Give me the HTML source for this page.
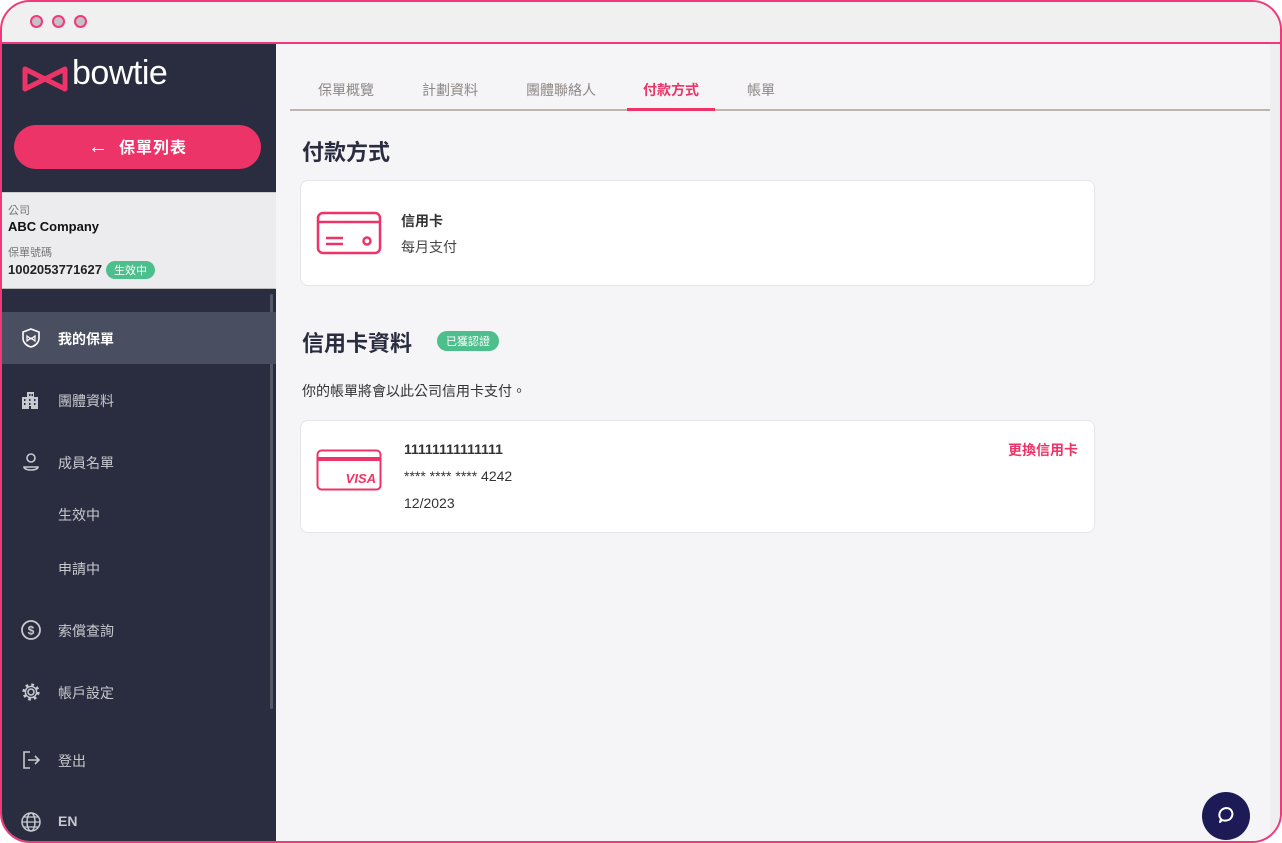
<!DOCTYPE html>
<html><head><meta charset="utf-8"><style>
*{box-sizing:border-box;margin:0;padding:0}
html,body{width:1282px;height:843px;overflow:hidden;background:#fff}
body{font-family:"Liberation Sans","Noto Sans CJK TC",sans-serif;position:relative}
.win{position:absolute;left:0;top:0;width:1282px;height:843px;border:2px solid #f0397a;border-radius:30px;overflow:hidden;background:#f5f5f7}
.title{position:absolute;left:0;top:0;right:0;height:42px;background:#f0f0f0;border-bottom:2px solid #f0397a}
.dot{position:absolute;top:13px;width:13px;height:13px;border-radius:50%;background:#c4c0c6;border:2px solid #f0397a}
.side{position:absolute;left:0;top:42px;width:274px;bottom:0;background:#2a2d3f}
.abs{position:absolute}
.btn{position:absolute;left:12px;top:81px;width:247px;height:44px;border-radius:22px;background:#ec3468;color:#fff;font-size:16px;font-weight:bold;text-align:center;line-height:44px;letter-spacing:1px}
.info{position:absolute;left:0;top:148px;width:274px;height:97px;background:#ececef;border-top:1px solid #ccc;border-bottom:1px solid #bbb}
.nav{position:absolute;left:0;width:274px;height:52px;color:#c8c9cf;font-size:14px}
.nav span{position:absolute;left:56px;top:17px}
.nav svg{position:absolute;left:18px;top:15px}
.main{position:absolute;left:274px;top:42px;right:0;bottom:0}
.tab{position:absolute;top:36px;font-size:14px;color:#8e8784}
.card{position:absolute;left:24px;background:#fff;border:1px solid #e3e5e9;border-radius:8px;width:795px}
</style></head><body>
<div class="win">
<div class="title">
<div class="dot" style="left:28px"></div><div class="dot" style="left:50px"></div><div class="dot" style="left:72px"></div>
</div>
<div class="side">
<svg class="abs" style="left:20px;top:22px" width="46" height="26" viewBox="0 0 46 26"><path d="M3 3 L23 13 L3 23 Z M43 3 L23 13 L43 23 Z" fill="none" stroke="#ec3468" stroke-width="5" stroke-linejoin="round"/></svg>
<div class="abs" style="left:70px;top:10px;color:#fff;font-size:34px;letter-spacing:-0.5px">bowtie</div>
<div class="btn"><span style="font-weight:normal;font-size:20px;margin-right:10px">←</span>保單列表</div>
<div class="info">
<div class="abs" style="left:6px;top:9px;font-size:11px;color:#777">公司</div>
<div class="abs" style="left:6px;top:26px;font-size:13px;font-weight:bold;color:#111">ABC Company</div>
<div class="abs" style="left:6px;top:51px;font-size:11px;color:#777">保單號碼</div>
<div class="abs" style="left:6px;top:69px;font-size:13px;font-weight:bold;color:#222">1002053771627</div>
<div class="abs" style="left:104px;top:68px;background:#4dbf8c;color:#fff;font-size:11px;border-radius:9px;padding:1px 8px">生效中</div>
</div>
<div class="abs" style="left:268px;top:250px;width:3px;height:415px;background:#555866;border-radius:2px"></div>
<div class="nav" style="top:268px;background:#4a4e61;color:#fff;font-weight:bold"><svg width="22" height="22" viewBox="0 0 22 22"><path d="M11 2 L19 5 V11 C19 16 15 19 11 20 C7 19 3 16 3 11 V5 Z" fill="none" stroke="#fff" stroke-width="1.6"/><path d="M7 9 L11 12 L15 9 V14 L11 11 L7 14 Z" fill="none" stroke="#fff" stroke-width="1.2"/></svg><span>我的保單</span></div>
<div class="nav" style="top:330px"><svg width="20" height="22" viewBox="0 0 20 22"><path d="M2 20 V8 H7 V3 H14 V8 H18 V20 Z" fill="#c8c9cf"/><path d="M9 5h1.5v2H9zM11.5 5H13v2h-1.5zM4 10h1.5v2H4zM9 10h1.5v2H9zM14 10h1.5v2H14zM4 14h1.5v2H4zM9 14h1.5v2H9zM14 14h1.5v2H14zM9 17h2v3H9z" fill="#2a2d3f"/></svg><span>團體資料</span></div>
<div class="nav" style="top:392px"><svg width="22" height="22" viewBox="0 0 22 22"><circle cx="11" cy="7" r="4" fill="none" stroke="#c8c9cf" stroke-width="1.6"/><path d="M4 16 H18 C18 20 4 20 4 16 Z" fill="none" stroke="#c8c9cf" stroke-width="1.6"/></svg><span>成員名單</span></div>
<div class="nav" style="top:444px"><span>生效中</span></div>
<div class="nav" style="top:498px"><span>申請中</span></div>
<div class="nav" style="top:560px"><svg width="22" height="22" viewBox="0 0 22 22"><circle cx="11" cy="11" r="9" fill="none" stroke="#c8c9cf" stroke-width="1.8"/><text x="11" y="15.5" text-anchor="middle" font-size="12" font-weight="bold" fill="#c8c9cf" font-family="Liberation Sans">$</text></svg><span>索償查詢</span></div>
<div class="nav" style="top:622px"><svg width="22" height="22" viewBox="0 0 22 22"><circle cx="11" cy="11" r="3" fill="none" stroke="#c8c9cf" stroke-width="1.6"/><circle cx="11" cy="11" r="7" fill="none" stroke="#c8c9cf" stroke-width="3.2" stroke-dasharray="2.6 2.9"/><circle cx="11" cy="11" r="5.6" fill="none" stroke="#c8c9cf" stroke-width="1.4"/></svg><span>帳戶設定</span></div>
<div class="nav" style="top:690px"><svg width="22" height="22" viewBox="0 0 22 22"><path d="M10 3 H4 V19 H10" fill="none" stroke="#c8c9cf" stroke-width="1.6"/><path d="M8 11 H19 M15 7 L19 11 L15 15" fill="none" stroke="#c8c9cf" stroke-width="1.6"/></svg><span>登出</span></div>
<div class="nav" style="top:752px;font-weight:bold"><svg width="22" height="22" viewBox="0 0 22 22"><circle cx="11" cy="11" r="9" fill="none" stroke="#c8c9cf" stroke-width="1.5"/><ellipse cx="11" cy="11" rx="4" ry="9" fill="none" stroke="#c8c9cf" stroke-width="1.5"/><path d="M2 11 H20 M4 6 H18 M4 16 H18" stroke="#c8c9cf" stroke-width="1.3"/></svg><span>EN</span></div>
</div>
<div class="main">
<div class="abs" style="right:0;top:0;width:10px;bottom:0;background:#efeff1"></div>
<div class="abs" style="left:14px;top:65px;width:980px;height:2px;background:#bdb6ae"></div>
<div class="tab" style="left:42px">保單概覽</div>
<div class="tab" style="left:146px">計劃資料</div>
<div class="tab" style="left:250px">團體聯絡人</div>
<div class="tab" style="left:367px;color:#ec3468;font-weight:bold">付款方式</div>
<div class="tab" style="left:471px">帳單</div>
<div class="abs" style="left:351px;top:64px;width:88px;height:3px;background:#ec3468"></div>
<div class="abs" style="left:26px;top:91px;font-size:22px;font-weight:bold;color:#2a2d3f">付款方式</div>
<div class="card" style="top:136px;height:106px">
<svg class="abs" style="left:15px;top:30px" width="66" height="44" viewBox="0 0 66 44"><rect x="2" y="2" width="62" height="40" rx="5" fill="none" stroke="#ec3468" stroke-width="2.5"/><path d="M2 11 H64" stroke="#ec3468" stroke-width="2.5"/><path d="M10 27 H27 M10 33 H27" stroke="#ec3468" stroke-width="2.5"/><circle cx="51" cy="30" r="3.5" fill="none" stroke="#ec3468" stroke-width="2.5"/></svg>
<div class="abs" style="left:100px;top:30px;font-size:14px;font-weight:bold;color:#333">信用卡</div>
<div class="abs" style="left:100px;top:56px;font-size:14px;color:#444">每月支付</div>
</div>
<div class="abs" style="left:26px;top:282px;font-size:22px;font-weight:bold;color:#2a2d3f">信用卡資料</div>
<div class="abs" style="left:161px;top:287px;background:#4dbf8c;color:#fff;font-size:11px;border-radius:10px;padding:2px 9px">已獲認證</div>
<div class="abs" style="left:26px;top:337px;font-size:14px;color:#333">你的帳單將會以此公司信用卡支付。</div>
<div class="card" style="top:376px;height:113px">
<svg class="abs" style="left:15px;top:28px" width="66" height="42" viewBox="0 0 66 42"><rect x="1.5" y="1.5" width="63" height="39" rx="4" fill="none" stroke="#ec3468" stroke-width="2"/><rect x="1.5" y="8" width="63" height="4" fill="#ec3468"/><text x="60" y="34" text-anchor="end" font-size="13" font-weight="bold" font-style="italic" fill="#ec3468" font-family="Liberation Sans">VISA</text></svg>
<div class="abs" style="left:103px;top:20px;font-size:14px;font-weight:bold;color:#333">11111111111111</div>
<div class="abs" style="left:103px;top:47px;font-size:14px;color:#333">**** **** **** 4242</div>
<div class="abs" style="left:103px;top:74px;font-size:14px;color:#333">12/2023</div>
<div class="abs" style="right:16px;top:19px;font-size:14px;font-weight:bold;color:#ec3468">更換信用卡</div>
</div>
<div class="abs" style="left:926px;top:748px;width:48px;height:48px;border-radius:50%;background:#1c1b55">
<svg class="abs" style="left:13px;top:12px" width="22" height="22" viewBox="0 0 22 22"><path d="M5 18 L6 15 C3 12 4 5 11 4 C17 4 19 10 16 14 C14 17 9 17 7 16 Z" fill="none" stroke="#fff" stroke-width="2" stroke-linejoin="round"/></svg>
</div>
</div>
</div>
</body></html>
